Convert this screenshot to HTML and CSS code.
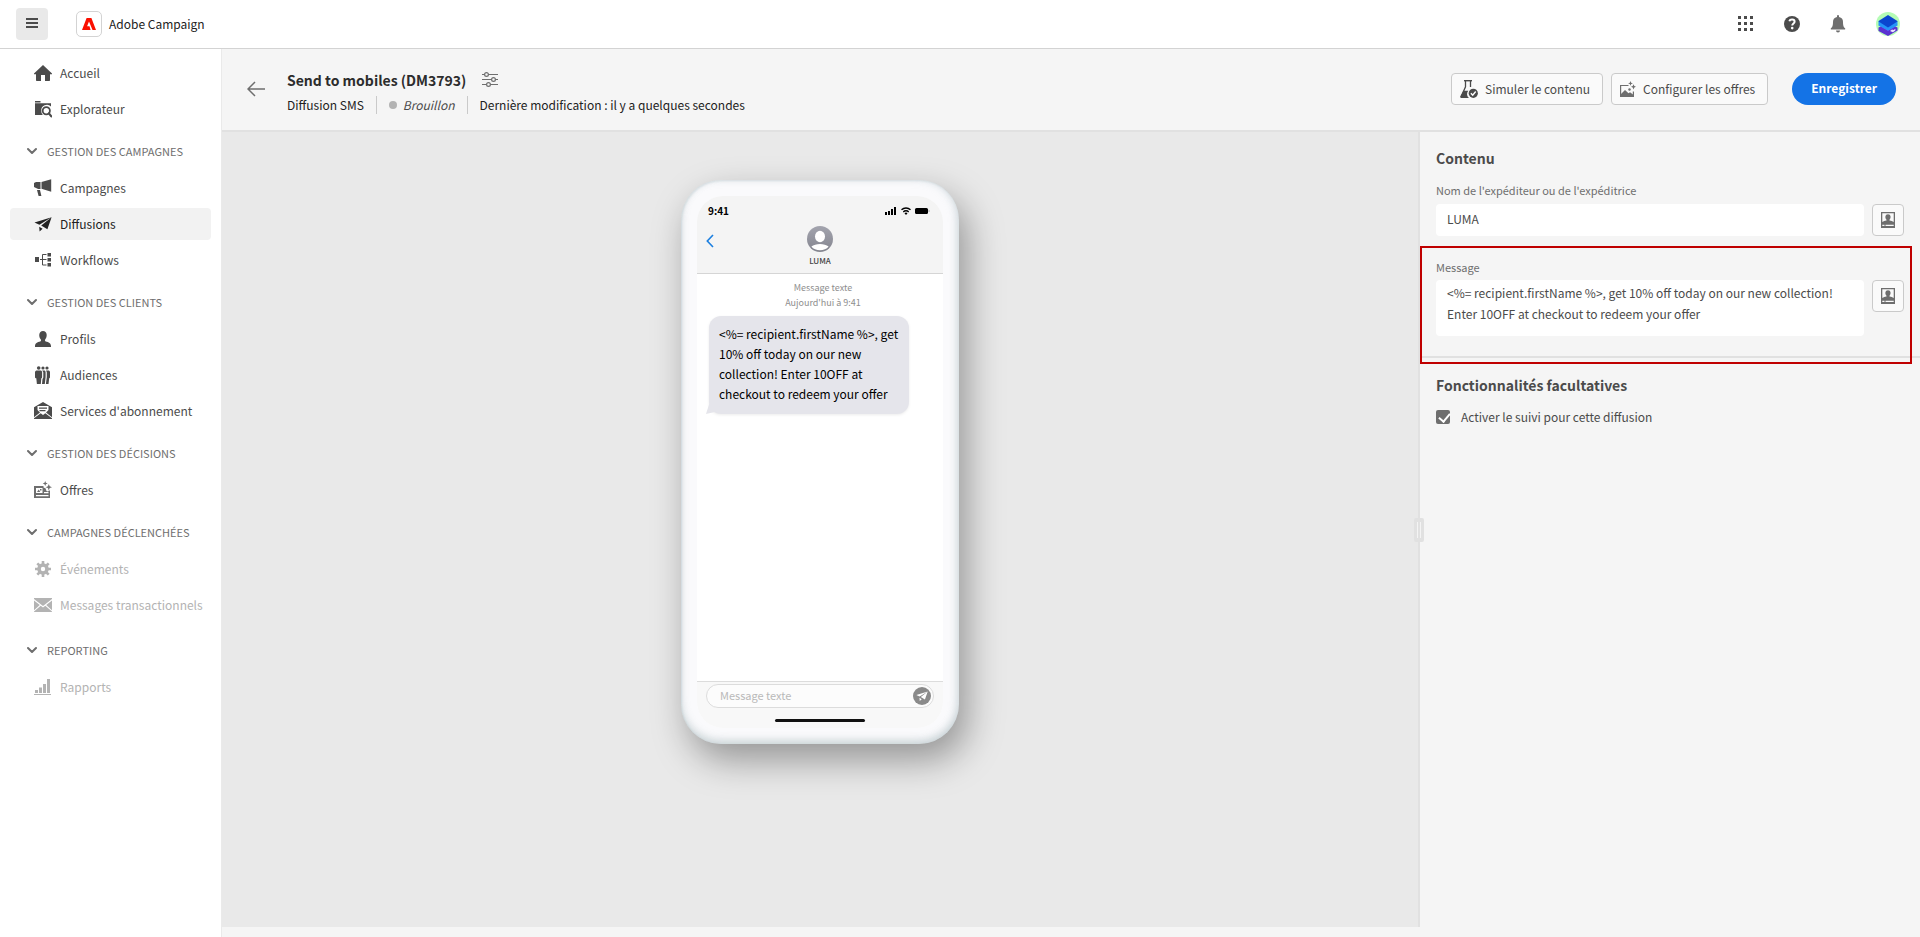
FILE: index.html
```html
<!DOCTYPE html>
<html lang="fr">
<head>
<meta charset="utf-8">
<title>Adobe Campaign</title>
<link rel="stylesheet" href="styles.css">
</head>
<body>
<svg class="sprite" aria-hidden="true">
  <symbol id="chevron" viewBox="0 0 10 10"><path d="M1 3l4 4 4-4" fill="none" stroke="currentColor" stroke-width="2" stroke-linecap="round" stroke-linejoin="round"/></symbol>
  <symbol id="plane" viewBox="0 0 18 18"><path d="M0.500 7.600L17.600 2.300 5.400 9.800z M17.600 2.300L13.400 14.200 7.200 10.600z M5.200 11.800l3.400 1.900-3 2.700z" fill="currentColor"/></symbol>
  <symbol id="profile-card" viewBox="0 0 16 16"><path fill="currentColor" d="M1 0h14v16H1zM2.300 1.300v8.700c1.200-.8 2.700-1 3.900-1.400.5-.2.500-.6.100-1.100C4.800 5.700 5 2.300 8 2.300s3.200 3.400 1.700 5.200c-.4.500-.4.900.1 1.100 1.200.4 2.700.6 3.900 1.400V1.300zM2.300 12.700v1.300h2.200v-1.300zM5.500 12.700v1.300h8.200v-1.300z" fill-rule="evenodd"/></symbol>
</svg>

<header class="topbar">
  <button class="menu-button" type="button" aria-label="Menu">
    <svg width="12" height="10" viewBox="0 0 12 10"><path d="M0 1h12M0 5h12M0 9h12" stroke="#4b4b4b" stroke-width="2"/></svg>
  </button>
  <a class="brand" href="#">
    <span class="brand-logo"><svg width="14" height="12" viewBox="0 0 14 12"><path d="M4.600 0h4.800L14 12h-3.500L7 3.400 5.100 8.200h2.400L8.600 12H0z" fill="#fa0f00"/></svg></span>
    <span>Adobe Campaign</span>
  </a>
  <div class="topbar-actions">
    <button class="icon-button" type="button" aria-label="Applications">
      <svg width="16" height="16" viewBox="0 0 16 16" fill="#4b4b4b"><path d="M0 0h3v3H0zM6 0h3v3H6zM12 0h3v3h-3zM0 6h3v3H0zM6 6h3v3H6zM12 6h3v3h-3zM0 12h3v3H0zM6 12h3v3H6zM12 12h3v3h-3z"/></svg>
    </button>
    <button class="icon-button" type="button" aria-label="Aide">
      <svg width="16" height="16" viewBox="0 0 16 16"><circle cx="8" cy="8" r="8" fill="#4b4b4b"/><path d="M5.300 5.200C6 3 10.600 2.900 10.600 5.700 10.600 7.500 8.200 7.600 8.200 9.600" fill="none" stroke="#fff" stroke-width="2"/><circle cx="8.200" cy="12.100" r="1.300" fill="#fff"/></svg>
    </button>
    <button class="icon-button" type="button" aria-label="Notifications">
      <svg width="16" height="18" viewBox="0 0 16 18" fill="#6e6e6e"><path d="M7 2V1a1 1 0 0 1 2 0v1c3 .6 4 2.700 4 5 0 4 .9 5.300 2 6.200.6.500.3 1.300-.4 1.300H1.400c-.7 0-1-.8-.4-1.300C2.100 12.300 3 11 3 7c0-2.300 1-4.400 4-5zM6 15.500h4a2 2 0 0 1-4 0z"/></svg>
    </button>
    <button class="icon-button" type="button" aria-label="Compte">
      <svg width="24" height="24" viewBox="0 0 24 24"><circle cx="12" cy="12" r="12" fill="#b5fcb5"/><path d="M2.500 15.500L12 11l9.500 4.500v3L12 24l-9.500-5z" fill="#5a32d0"/><path d="M2.500 13L12 9l9.500 4-9.500 6z" fill="#6a5cf5"/><path d="M2.500 9.500h19v4L12 18.500l-9.500-5z" fill="#2594f8"/><path d="M12 3l9.800 6.300L12 15.400 2.200 9.300z" fill="#0b46cf"/><path d="M14 19l2-1.500 1.500.5 2-1.200-.3 2-2.400 1.400z" fill="#e8e4ff"/></svg>
    </button>
  </div>
</header>

<div class="shell">
  <nav class="sidebar" aria-label="Navigation">
    <ul class="nav-list">
      <li><a class="nav-item" href="#"><svg class="nav-icon" viewBox="0 0 18 18"><path d="M9 1l9 8.500c.3.400 0 .8-.4.800H16v6c0 .4-.3.700-.7.700H11v-6H7v6H2.700c-.4 0-.7-.3-.7-.7v-6H.4c-.4 0-.7-.4-.4-.8z" fill="currentColor"/></svg>Accueil</a></li>
      <li><a class="nav-item" href="#"><svg class="nav-icon" viewBox="0 0 18 18"><path d="M1 1h5.500v1.400H1zM1 3.300h16v3.300a5.600 5.600 0 0 0-9.700 4.400c0 1.600.6 3 1.600 4H1z" fill="currentColor"/><circle cx="12.300" cy="10.800" r="3.600" fill="none" stroke="currentColor" stroke-width="1.800"/><path d="M14.900 13.400l2.400 3" stroke="currentColor" stroke-width="2.200" stroke-linecap="round"/></svg>Explorateur</a></li>
    </ul>
    <h2 class="nav-heading"><svg class="chevron"><use href="#chevron"/></svg>GESTION DES CAMPAGNES</h2>
    <ul class="nav-list">
      <li><a class="nav-item" href="#"><svg class="nav-icon" viewBox="0 0 18 18"><path d="M6.500 3v7H4.200L2 9 0 8V4l2-1zM7.500 3L17.200.3v12.500L7.500 9.800zM3 11h3l1.400 6H4.600z" fill="currentColor"/></svg>Campagnes</a></li>
      <li><a class="nav-item nav-item-active" href="#" aria-current="page"><svg class="nav-icon"><use href="#plane"/></svg>Diffusions</a></li>
      <li><a class="nav-item" href="#"><svg class="nav-icon" viewBox="0 0 18 18"><path d="M1 6h4v5H1zM13.500 2H17v3.500h-3.500zM13.500 7H17v3.500h-3.500zM13.500 12H17v3.500h-3.500z" fill="currentColor"/><path d="M6 8.500h6.500M12.500 3.500h-4v10.500h4" fill="none" stroke="currentColor"/></svg>Workflows</a></li>
    </ul>
    <h2 class="nav-heading"><svg class="chevron"><use href="#chevron"/></svg>GESTION DES CLIENTS</h2>
    <ul class="nav-list">
      <li><a class="nav-item" href="#"><svg class="nav-icon" viewBox="0 0 18 18"><path d="M9 1c4.500 0 4.500 5.800 2.300 8.300-.6.800-.4 1.900.4 2.100 3 .7 5.300 1.800 5.300 4.600v1H1v-1c0-2.800 2.300-3.900 5.300-4.600.8-.2 1-1.300.4-2.100C4.500 6.800 4.500 1 9 1z" fill="currentColor"/></svg>Profils</a></li>
      <li><a class="nav-item" href="#"><svg class="nav-icon" viewBox="0 0 18 18"><g fill="currentColor"><circle cx="4.700" cy="2" r="1.800"/><circle cx="9" cy="2" r="1.600"/><circle cx="13" cy="2" r="1.600"/><path d="M3 4.500h3.400c1 0 1.700.7 1.700 1.700v5c0 .6-.4.900-.8 1L6.800 18H2.900l-.6-5.800c-.6-.1-1.300-.4-1.300-1v-5C1 5.200 2 4.500 3 4.500zM8.200 4.500H10c1 0 1.600.7 1.600 1.700v5L10.800 18H8l.5-5 .8-1.500V6.200zM12 4.500h2.200c1 0 1.800.7 1.800 1.700v5c0 .6-.3.900-.8 1l-.7 5.800h-2.600l.9-7V6.200z"/></g></svg>Audiences</a></li>
      <li><a class="nav-item" href="#"><svg class="nav-icon" viewBox="0 0 18 18"><path d="M9 0l9 5.200v10L12 10.500 14.500 8V4H3.500v4L6 10.500l-6 4.700v-10zM5 5.500h8v1.200H5zM5.500 8h6v1.200h-6zM0 17v-.7l6.700-5 2.300 1.800 2.300-1.800 6.700 5v.7z" fill="currentColor"/></svg>Services d'abonnement</a></li>
    </ul>
    <h2 class="nav-heading"><svg class="chevron"><use href="#chevron"/></svg>GESTION DES DÉCISIONS</h2>
    <ul class="nav-list">
      <li><a class="nav-item" href="#"><svg class="nav-icon nav-icon-soft" viewBox="0 0 18 18"><path fill-rule="evenodd" d="M0 5h9.500v1.500l2 .8 1 2.700 1.500.5 1-1h1V17H0zM2 7v5h6.500V7zM10 11v1.200h4.500V11zM2 14v1.200h12.500V14z" fill="currentColor"/><path d="M3 11l1.700-2.500L6.300 11zM6 8h1.500v1.500H6zM11.200 0l.7 1.800 1.800.7-1.800.7-.7 1.800-.7-1.800-1.800-.7 1.800-.7zM14.800 3l.9 2.300 2.300.9-2.300.9-.9 2.300-.9-2.300-2.300-.9 2.300-.9z" fill="currentColor"/></svg>Offres</a></li>
    </ul>
    <h2 class="nav-heading"><svg class="chevron"><use href="#chevron"/></svg>CAMPAGNES DÉCLENCHÉES</h2>
    <ul class="nav-list nav-list-spaced">
      <li><a class="nav-item nav-item-disabled" href="#" aria-disabled="true"><svg class="nav-icon" viewBox="0 0 18 18"><circle cx="9" cy="9" r="4" fill="none" stroke="currentColor" stroke-width="3.600"/><path d="M9 1v3M9 14v3M1 9h3M14 9h3M3.300 3.300l2.200 2.200M12.500 12.500l2.200 2.200M3.300 14.700l2.200-2.200M12.500 5.500l2.200-2.200" stroke="currentColor" stroke-width="2.600"/></svg>Événements</a></li>
      <li><a class="nav-item nav-item-disabled" href="#" aria-disabled="true"><svg class="nav-icon" viewBox="0 0 18 18"><path d="M0 2h18v1L9 10 0 3zM0 4.400l5.800 4.700L0 14.300zM18 4.400v9.900l-5.800-5.200zM0 16v-.4l6.700-5.800L9 11.600l2.300-1.800 6.700 5.800v.4z" fill="currentColor"/></svg>Messages transactionnels</a></li>
    </ul>
    <h2 class="nav-heading"><svg class="chevron"><use href="#chevron"/></svg>REPORTING</h2>
    <ul class="nav-list">
      <li><a class="nav-item nav-item-disabled" href="#" aria-disabled="true"><svg class="nav-icon" viewBox="0 0 18 18"><path d="M1 12h3v3H1zM5 9.500h3V15H5zM9 6h3v9H9zM13 1h3v14h-3zM0 16h17v1H0z" fill="currentColor"/></svg>Rapports</a></li>
    </ul>
  </nav>

  <main class="main">
    <div class="page-header">
      <button class="icon-button back-button" type="button" aria-label="Retour">
        <svg width="18" height="16" viewBox="0 0 18 16"><path d="M8 1L1 8l7 7M1 8h17" fill="none" stroke="#6e6e6e" stroke-width="1.500"/></svg>
      </button>
      <div class="page-heading">
        <div class="title-row">
          <h1 class="page-title">Send to mobiles (DM3793)</h1>
          <button class="icon-button" type="button" aria-label="Paramètres">
            <svg width="16" height="16" viewBox="0 0 16 16" fill="#f5f5f5" stroke="#6e6e6e" stroke-width="1.200"><path d="M0 2.500h16M0 7.500h16M0 12.500h16"/><circle cx="4.500" cy="2.500" r="1.900"/><circle cx="11.500" cy="7.500" r="1.900"/><circle cx="6.500" cy="12.500" r="1.900"/></svg>
          </button>
        </div>
        <div class="meta-row">
          <span class="meta">Diffusion SMS</span>
          <span class="meta meta-status"><span class="status-dot"></span><em>Brouillon</em></span>
          <span class="meta">Dernière modification : il y a quelques secondes</span>
        </div>
      </div>
      <div class="page-actions">
        <button class="action-button" type="button"><svg width="18" height="18" viewBox="0 0 18 18"><path d="M4 .7h8" stroke="#4b4b4b" stroke-width="1.400"/><path d="M5.500 1v5.800L1.300 16.500M10.500 1v6" fill="none" stroke="#4b4b4b" stroke-width="1.300"/><path d="M3.300 10.800h4.900a5.600 5.600 0 0 0 .7 7.200H1.200c-.9 0-1.300-.7-1-1.400z" fill="#4b4b4b"/><circle cx="13.300" cy="13.300" r="4.600" fill="#4b4b4b"/><path d="M10.900 13.300l1.800 1.900 3-3.700" fill="none" stroke="#fff" stroke-width="1.400"/></svg>Simuler le contenu</button>
        <button class="action-button" type="button"><svg width="16" height="16" viewBox="0 0 16 16" fill="#6e6e6e"><path d="M8.500 4.500H.6v11h12.800V10.500" fill="none" stroke="#6e6e6e" stroke-width="1.200"/><path d="M1 13l4-4 3.500 3.300 1.500-1 3 2.200V15.500H1z"/><circle cx="9.500" cy="8.500" r="1.200"/><path d="M10.500 0l.7 1.700 1.700.7-1.700.7-.7 1.700-.7-1.700-1.700-.7 1.700-.7zM13.500 3.200l.8 1.800 1.700.8-1.700.8-.8 1.800-.8-1.800-1.700-.8 1.700-.8z"/></svg>Configurer les offres</button>
        <button class="primary-button" type="button">Enregistrer</button>
      </div>
    </div>

    <div class="workspace">
      <section class="canvas" aria-label="Aperçu">
        <div class="phone">
          <div class="screen">
            <div class="screen-header">
              <div class="status-bar">
                <span class="status-time">9:41</span>
                <svg width="46" height="10" viewBox="0 0 46 10"><path d="M1 6h2v3H1zM4 5h2v4H4zM7 3h2v6H7zM10 1h2v8h-2z"/><path d="M17.500 3.700a6.600 6.600 0 0 1 9 0M19.300 5.900a3.800 3.800 0 0 1 5.400 0" fill="none" stroke="#000" stroke-width="1.400"/><path d="M22 9l-1.500-1.800a2.100 2.100 0 0 1 3 0z"/><rect x="31" y="2" width="13" height="6" rx="1.500"/><path d="M45 4v2" stroke="#aaa"/></svg>
              </div>
              <div class="contact-bar">
                <svg class="contact-back" width="8" height="14" viewBox="0 0 8 14"><path d="M7 1L1.300 7 7 13" fill="none" stroke="#1b7fe0" stroke-width="1.600"/></svg>
                <div class="contact">
                  <svg width="26" height="26" viewBox="0 0 26 26"><defs><linearGradient id="avatar-fill" x2="0" y2="1"><stop offset="0" stop-color="#a3a4ae"/><stop offset="1" stop-color="#84858f"/></linearGradient></defs><circle cx="13" cy="13" r="13" fill="url(#avatar-fill)"/><ellipse cx="13" cy="10.500" rx="5" ry="5.700" fill="#fff"/><path d="M4.400 20.500c4-3.400 13.200-3.400 17.200 0-3.700 5-13.500 5-17.200 0z" fill="#fff"/></svg>
                  <span class="contact-name">LUMA</span>
                </div>
              </div>
            </div>
            <div class="conversation">
              <p class="timestamp">Message texte<br>Aujourd'hui à 9:41</p>
              <p class="bubble">&lt;%= recipient.firstName %&gt;, get<br>10% off today on our new<br>collection! Enter 10OFF at<br>checkout to redeem your offer</p>
            </div>
            <div class="composer">
              <div class="composer-box">
                <input class="composer-input" type="text" placeholder="Message texte" aria-label="Message texte">
                <button class="send-button" type="button" aria-label="Envoyer"><svg width="12" height="12"><use href="#plane"/></svg></button>
              </div>
              <div class="home-bar"></div>
            </div>
          </div>
        </div>
      </section>

      <aside class="panel">
        <div class="splitter-grip"></div>
        <section class="panel-content">
          <h2 class="panel-title">Contenu</h2>
          <div class="field">
            <label class="field-label" for="sender">Nom de l'expéditeur ou de l'expéditrice</label>
            <div class="field-row">
              <input class="text-input" id="sender" type="text" value="LUMA">
              <button class="picker-button" type="button" aria-label="Personnaliser l'expéditeur"><svg width="16" height="16"><use href="#profile-card"/></svg></button>
            </div>
          </div>
          <div class="field message-field">
            <label class="field-label" for="message">Message</label>
            <div class="field-row">
              <textarea class="text-input text-area" id="message">&lt;%= recipient.firstName %&gt;, get 10% off today on our new collection!
Enter 10OFF at checkout to redeem your offer</textarea>
              <button class="picker-button" type="button" aria-label="Personnaliser le message"><svg width="16" height="16"><use href="#profile-card"/></svg></button>
            </div>
            <div class="highlight"></div>
          </div>
        </section>
        <section class="panel-options">
          <h2 class="panel-title">Fonctionnalités facultatives</h2>
          <label class="check-label"><input class="check" type="checkbox" checked>Activer le suivi pour cette diffusion</label>
        </section>
      </aside>
    </div>
  </main>
</div>
</body>
</html>
```
FILE: styles.css
```css
:root {
  --font: "Noto Sans CJK SC", "Noto Sans", sans-serif;
  --text: #4b4b4b;
  --dark: #2c2c2c;
  --muted: #6e6e6e;
  --line: #e1e1e1;
  --surface: #f5f5f5;
  --body: 12px;
}

* { box-sizing: border-box; }

body {
  margin: 0;
  height: 100vh;
  display: flex;
  flex-direction: column;
  overflow: hidden;
  background: #fff;
  color: var(--text);
  font: 400 var(--body)/20px var(--font);
}

button, input, textarea { font: inherit; color: inherit; }
button { cursor: pointer; }
h1, h2, p, ul { margin: 0; padding: 0; }
ul { list-style: none; }
a { color: inherit; text-decoration: none; }
svg { flex: none; display: block; }

.sprite { position: absolute; width: 0; height: 0; }

/* Top bar */
.topbar {
  display: flex;
  align-items: center;
  height: 49px;
  flex: none;
  padding: 0 20px 0 16px;
  border-bottom: 1px solid #d3d3d3;
}

.menu-button {
  display: grid;
  place-items: center;
  width: 32px;
  height: 32px;
  padding: 0 0 2px;
  border: 0;
  border-radius: 4px;
  background: #e9e9e9;
}

.brand {
  display: flex;
  align-items: center;
  gap: 7px;
  margin-left: 28px;
  color: #222;
}

.brand-logo {
  display: grid;
  place-items: center;
  width: 26px;
  height: 26px;
  border: 1px solid #d3d3d3;
  border-radius: 5px;
}

.topbar-actions {
  display: flex;
  align-items: center;
  gap: 30px;
  margin-left: auto;
}

.icon-button { padding: 0; border: 0; background: none; }

/* Sidebar */
.shell { display: flex; flex: 1; min-height: 0; }

.sidebar {
  flex: none;
  width: 222px;
  padding: 8px 10px 0;
  border-right: 1px solid #eaeaea;
}

.nav-list { display: flex; flex-direction: column; gap: 4px; }
.nav-list-spaced { padding-bottom: 3px; }

.nav-item {
  display: flex;
  align-items: center;
  gap: 8px;
  height: 32px;
  padding-left: 24px;
  border-radius: 4px;
  white-space: nowrap;
}

.nav-item-active { background: #f2f2f2; color: #222; }
.nav-item-disabled { color: #b3b3b3; }
.nav-icon { width: 18px; height: 18px; }
.nav-icon-soft { color: var(--muted); }

.nav-heading {
  display: flex;
  align-items: center;
  gap: 10px;
  height: 24px;
  margin: 14px 0 9px;
  padding-left: 17px;
  color: var(--muted);
  font-size: 11px;
  font-weight: 400;
  white-space: nowrap;
}

.chevron { width: 10px; height: 10px; }

/* Page header */
.main {
  display: flex;
  flex: 1;
  flex-direction: column;
  min-width: 0;
  padding-bottom: 10px;
  background: var(--surface);
}

.page-header {
  display: flex;
  align-items: center;
  height: 83px;
  flex: none;
  padding: 0 24px 2px 25px;
  border-bottom: 2px solid var(--line);
}

.page-heading { margin-left: 22px; padding-top: 4px; }
.title-row { display: flex; align-items: center; gap: 16px; }
.page-title { color: var(--dark); font-size: 14px; font-weight: 700; line-height: 24px; }
.meta-row { display: flex; align-items: center; padding-top: 4px; color: #222; }
.meta { line-height: 18px; }
.meta + .meta { margin-left: 12px; padding-left: 12px; border-left: 1px solid #cacaca; }
.meta-status { display: flex; align-items: center; gap: 6px; color: var(--text); }
.status-dot { width: 8px; height: 8px; border-radius: 50%; background: #b3b3b3; }

.page-actions { display: flex; gap: 8px; margin-left: auto; }

.action-button {
  display: flex;
  align-items: center;
  gap: 7px;
  height: 32px;
  padding: 0 12px 0 8px;
  border: 1px solid #cacaca;
  border-radius: 4px;
  background: #fafafa;
}

.primary-button {
  height: 32px;
  margin-left: 16px;
  padding: 0 19px 2px;
  border: 0;
  border-radius: 16px;
  background: #1473e6;
  color: #fff;
  font-weight: 700;
}

/* Phone preview */
.workspace { display: flex; flex: 1; min-height: 0; }

.canvas {
  display: flex;
  flex: 1;
  justify-content: center;
  align-items: flex-start;
  padding-top: 48px;
  background: #e9e9e9;
  overflow: hidden;
}

.phone {
  display: flex;
  width: 278px;
  height: 564px;
  padding: 16px;
  border-radius: 40px;
  background: #fafafc;
  box-shadow:
    inset 0 -4px 8px rgba(120, 145, 150, 0.3),
    inset -3px 0 8px rgba(160, 180, 190, 0.2),
    inset 1px 1px 2px rgba(190, 205, 210, 0.4),
    8px 16px 36px rgba(0, 0, 0, 0.36);
}

.screen {
  display: flex;
  flex: 1;
  flex-direction: column;
  border-radius: 26px;
  overflow: hidden;
  background: #fff;
  color: #000;
}

.screen-header { height: 78px; background: #f4f4f4; border-bottom: 1px solid #d5d5d5; }

.status-bar {
  display: flex;
  align-items: center;
  justify-content: space-between;
  height: 30px;
  padding: 0 13px 0 11px;
}

.status-time { font-size: 10px; font-weight: 700; }

.contact-bar {
  display: grid;
  grid-template-columns: 1fr auto 1fr;
  padding: 0 9px;
}

.contact-back { margin-top: 8px; }
.contact { display: flex; flex-direction: column; align-items: center; }
.contact-name { color: #444; font-size: 8px; font-weight: 500; line-height: 18px; }

.conversation { flex: 1; padding: 6px 12px; }

.timestamp {
  padding-left: 6px;
  color: #8e8e8e;
  font-size: 9px;
  line-height: 15px;
  text-align: center;
}

.bubble {
  position: relative;
  width: 200px;
  margin-top: 6px;
  padding: 8px 10px 10px;
  border-radius: 12px;
  background: #e5e5eb;
  box-shadow: 0 1px 3px rgba(0, 0, 0, 0.08);
  line-height: 20px;
  white-space: nowrap;
}

.bubble::before {
  content: "";
  position: absolute;
  left: -3px;
  bottom: 0;
  width: 16px;
  height: 10px;
  background: #e5e5eb;
  clip-path: polygon(20% 0, 100% 0, 55% 80%, 0 100%);
}

.composer {
  display: flex;
  flex-direction: column;
  gap: 11px;
  height: 47px;
  padding: 2px 9px 0;
  border-top: 1px solid #dcdcdc;
  background: #f8f8f8;
}

.composer-box {
  display: flex;
  align-items: center;
  height: 24px;
  flex: none;
  padding: 0 2px 0 13px;
  border: 1px solid #dcdcdc;
  border-radius: 12px;
  background: #fcfcfc;
}

.composer-input {
  flex: 1;
  min-width: 0;
  padding: 0 0 2px;
  border: 0;
  outline: 0;
  background: none;
  font-size: 11px;
  line-height: 16px;
}

.composer-input::placeholder { color: #b9b9b9; opacity: 1; }

.send-button {
  display: grid;
  place-items: center;
  width: 18px;
  height: 18px;
  padding: 0;
  border: 0;
  border-radius: 50%;
  background: #8a8a8a;
  color: #fff;
}

.home-bar { align-self: center; width: 90px; height: 3px; flex: none; border-radius: 2px; background: #111; }

/* Settings panel */
.panel {
  position: relative;
  flex: none;
  width: 502px;
  border-left: 2px solid var(--line);
  background: var(--surface);
}

.splitter-grip {
  position: absolute;
  top: 50%;
  left: -6px;
  width: 10px;
  height: 24px;
  margin-top: -12px;
  border: 3px solid var(--line);
  border-top-width: 4px;
  border-bottom-width: 4px;
  border-radius: 2px;
  background: linear-gradient(90deg, #f4f4f4 1px, var(--line) 1px 3px, #f4f4f4 3px);
}

.panel-content { padding: 14px 16px 20px; border-bottom: 2px solid var(--line); }
.panel-options { padding: 15px 16px; }
.panel-title { font-size: 14px; font-weight: 700; line-height: 24px; }

.field { margin-top: 12px; }
.field-label { display: block; color: var(--muted); font-size: 11px; line-height: 16px; }
.field-row { display: flex; align-items: flex-start; gap: 8px; margin-top: 6px; }

.message-field { position: relative; margin-top: 23px; }
.message-field .field-row { margin-top: 5px; }

.text-input {
  flex: 1;
  min-width: 0;
  height: 32px;
  padding: 0 11px 3px;
  border: 0;
  border-radius: 4px;
  outline: 0;
  background: #fff;
}

.text-area {
  display: block;
  height: 56px;
  padding: 2px 11px;
  line-height: 21px;
  resize: none;
  overflow: hidden;
}

.picker-button {
  display: grid;
  place-items: center;
  width: 32px;
  height: 32px;
  padding: 0;
  border: 1px solid #cacaca;
  border-radius: 4px;
  background: #fafafa;
  color: var(--muted);
}

/* Frame drawn over the message field */
.highlight {
  position: absolute;
  inset: -13px -8px -28px -16px;
  border: 2px solid #c00000;
  pointer-events: none;
}

.check-label { display: flex; align-items: center; gap: 11px; margin-top: 10px; }

.check {
  appearance: none;
  width: 14px;
  height: 14px;
  margin: 0;
  border-radius: 2px;
  background: var(--muted);
}

.check::before {
  content: "";
  display: block;
  width: 5px;
  height: 9px;
  margin: 1px 5px;
  border: solid #fff;
  border-width: 0 2px 2px 0;
  transform: rotate(40deg);
}
```
